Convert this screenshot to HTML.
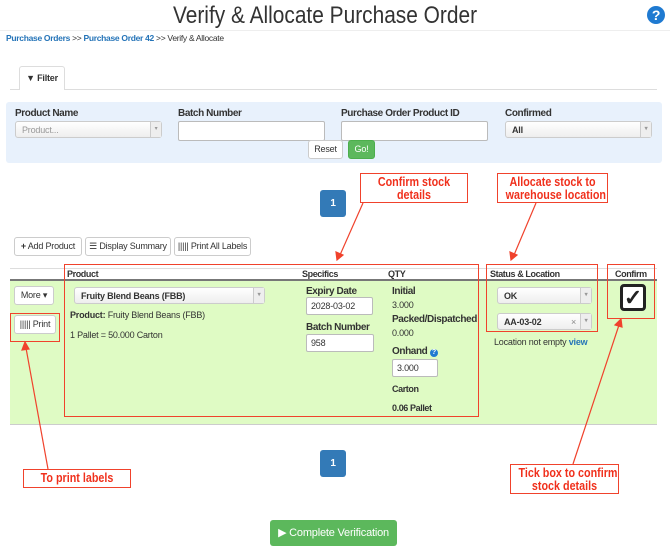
<!DOCTYPE html>
<html><head><meta charset="utf-8">
<style>
*{box-sizing:border-box;margin:0;padding:0}
body{width:670px;height:550px;position:relative;background:#fff;font-family:"Liberation Sans",Arial,sans-serif;color:#333;overflow:hidden;font-size:9px;letter-spacing:-0.2px}
.a{position:absolute;white-space:nowrap}
.inp{position:absolute;background:#fff;border:1px solid #bbb;border-radius:2px;height:17px;font-size:9px;padding:3px 4px;line-height:10px}
.sel{position:absolute;background:linear-gradient(#fff,#eee);border:1px solid #ccc;border-radius:3px;height:17px;font-size:9px;padding:3px 6px;line-height:10px;font-weight:bold}
.sel::after{content:"▾";position:absolute;right:0;top:0;width:10px;height:15px;border-left:1px solid #ccc;font-size:6px;color:#999;text-align:center;line-height:15px;background:#eee}
.btn{position:absolute;background:#fff;border:1px solid #ccc;border-radius:3px;font-size:9px;text-align:center;color:#333;white-space:nowrap}
.lbl{position:absolute;font-weight:bold;font-size:10px;color:#333;white-space:nowrap;letter-spacing:-0.4px}
.red{position:absolute;border:1.5px solid #f0422c}
.call{position:absolute;border:1.5px solid #f0422c;background:#fff;color:#f0301c;font-weight:bold;font-size:12.5px;letter-spacing:0;text-align:center;line-height:13px;white-space:nowrap}
.call span{display:block;transform:scaleX(0.86)}
.page{position:absolute;width:26px;height:27px;background:#337ab7;border-radius:3px;color:#fff;font-weight:bold;font-size:10px;text-align:center;line-height:27px}
</style></head><body>
<div class="a" style="left:0;top:0;width:670px;height:31px;border-bottom:1px solid #eee"></div>
<div class="a" style="left:0;top:2px;width:650px;text-align:center;font-size:24px;color:#333;line-height:28px;transform:scaleX(0.87);letter-spacing:0">Verify &amp; Allocate Purchase Order</div>
<div class="a" style="left:647px;top:6px;width:18px;height:18px;border-radius:50%;background:#1f7ad1;color:#fff;font-weight:bold;font-size:14px;text-align:center;line-height:18px">?</div>
<div class="a" style="left:6px;top:33px;font-size:8.5px;letter-spacing:-0.3px"><span style="color:#2574b8;font-weight:bold">Purchase Orders</span> &gt;&gt; <span style="color:#2574b8;font-weight:bold">Purchase Order 42</span> &gt;&gt; Verify &amp; Allocate</div>

<div class="a" style="left:10px;top:89px;width:647px;border-top:1px solid #ddd"></div>
<div class="a" style="left:19px;top:66px;width:46px;height:24px;border:1px solid #ddd;border-bottom:none;background:#fff;font-weight:bold;font-size:9px;text-align:center;line-height:22px;border-radius:3px 3px 0 0">▼ Filter</div>

<div class="a" style="left:6px;top:102px;width:656px;height:61px;background:#e8f1fc;border-radius:3px"></div>
<div class="lbl" style="left:15px;top:108px">Product Name</div>
<div class="lbl" style="left:178px;top:108px">Batch Number</div>
<div class="lbl" style="left:341px;top:108px">Purchase Order Product ID</div>
<div class="lbl" style="left:505px;top:108px">Confirmed</div>
<div class="sel" style="left:15px;top:121px;width:147px;font-weight:normal;color:#999">Product...</div>
<div class="inp" style="left:178px;top:121px;width:147px;height:20px"></div>
<div class="inp" style="left:341px;top:121px;width:147px;height:20px"></div>
<div class="sel" style="left:505px;top:121px;width:147px">All</div>
<div class="btn" style="left:308px;top:140px;width:35px;height:19px;line-height:17px">Reset</div>
<div class="btn" style="left:348px;top:140px;width:27px;height:19px;line-height:17px;background:#5cb85c;border-color:#4cae4c;color:#fff">Go!</div>

<div class="page" style="left:320px;top:190px">1</div>

<div class="btn" style="left:14px;top:237px;width:68px;height:19px;line-height:17px"><b>+</b> Add Product</div>
<div class="btn" style="left:85px;top:237px;width:86px;height:19px;line-height:17px">☰ Display Summary</div>
<div class="btn" style="left:174px;top:237px;width:77px;height:19px;line-height:17px">||||| Print All Labels</div>

<div class="a" style="left:10px;top:268px;width:647px;height:13px;border-top:1px solid #ddd;border-bottom:2px solid #777"></div>
<div class="a" style="left:10px;top:281px;width:647px;height:144px;background:#dffbc4;border-bottom:1px solid #ccc"></div>
<div class="lbl" style="left:67px;top:269px;font-size:9px">Product</div>
<div class="lbl" style="left:302px;top:269px;font-size:9px">Specifics</div>
<div class="lbl" style="left:388px;top:269px;font-size:9px">QTY</div>
<div class="lbl" style="left:490px;top:269px;font-size:9px">Status &amp; Location</div>
<div class="lbl" style="left:615px;top:269px;font-size:9px">Confirm</div>

<div class="btn" style="left:14px;top:286px;width:40px;height:19px;line-height:17px">More ▾</div>
<div class="btn" style="left:14px;top:315px;width:42px;height:19px;line-height:17px">||||| Print</div>

<div class="sel" style="left:74px;top:287px;width:191px">Fruity Blend Beans (FBB)</div>
<div class="a" style="left:70px;top:310px"><b>Product:</b> Fruity Blend Beans (FBB)</div>
<div class="a" style="left:70px;top:330px">1 Pallet = 50.000 Carton</div>

<div class="lbl" style="left:306px;top:286px">Expiry Date</div>
<div class="inp" style="left:306px;top:297px;width:67px;height:18px">2028-03-02</div>
<div class="lbl" style="left:306px;top:322px">Batch Number</div>
<div class="inp" style="left:306px;top:334px;width:68px;height:18px">958</div>

<div class="lbl" style="left:392px;top:286px">Initial</div>
<div class="a" style="left:392px;top:300px">3.000</div>
<div class="lbl" style="left:392px;top:314px">Packed/Dispatched</div>
<div class="a" style="left:392px;top:328px">0.000</div>
<div class="lbl" style="left:392px;top:346px">Onhand <span style="display:inline-block;width:8px;height:8px;border-radius:50%;background:#1f7ad1;color:#fff;font-size:7px;text-align:center;line-height:8px">?</span></div>
<div class="inp" style="left:392px;top:359px;width:46px;height:18px">3.000</div>
<div class="lbl" style="left:392px;top:384px;font-size:9px">Carton</div>
<div class="lbl" style="left:392px;top:403px;font-size:9px">0.06 Pallet</div>

<div class="sel" style="left:497px;top:287px;width:95px">OK</div>
<div class="sel" style="left:497px;top:313px;width:95px">AA-03-02<span style="position:absolute;right:15px;color:#888;font-weight:normal">×</span></div>
<div class="a" style="left:494px;top:337px">Location not empty <b style="color:#2574b8">view</b></div>

<div class="a" style="left:620px;top:284px;width:26px;height:27px;border:3px solid #222;border-radius:4px;background:#fff;font-size:22px;font-weight:bold;text-align:center;line-height:21px;color:#222">✓</div>

<div class="red" style="left:64px;top:264px;width:415px;height:153px"></div>
<div class="red" style="left:486px;top:264px;width:112px;height:68px"></div>
<div class="red" style="left:607px;top:264px;width:48px;height:55px"></div>
<div class="red" style="left:10px;top:313px;width:50px;height:29px"></div>

<div class="call" style="left:360px;top:173px;width:108px;height:30px;padding-top:2px"><span>Confirm stock<br>details</span></div>
<div class="call" style="left:497px;top:173px;width:111px;height:30px;padding-top:2px"><span>Allocate stock to<br>warehouse location</span></div>
<div class="call" style="left:23px;top:469px;width:108px;height:19px;line-height:16px"><span>To print labels</span></div>
<div class="call" style="left:510px;top:464px;width:109px;height:30px;padding-top:2px"><span>Tick box to confirm<br>stock details</span></div>

<svg class="a" style="left:0;top:0" width="670" height="550">
<g stroke="#f0422c" stroke-width="1.2" fill="#f0422c">
<line x1="363" y1="203" x2="340" y2="255"/><polygon points="337,260 336,252 343,255"/>
<line x1="536" y1="203" x2="514" y2="255"/><polygon points="511,260 510,252 517,255"/>
<line x1="48" y1="469" x2="26" y2="348"/><polygon points="25,342 22,350 29,349"/>
<line x1="573" y1="464" x2="619" y2="325"/><polygon points="621,319 615,325 622,327"/>
</g></svg>

<div class="page" style="left:320px;top:450px">1</div>
<div class="a" style="left:270px;top:520px;width:127px;height:26px;background:#5cb85c;border-radius:3px;color:#fff;font-size:11px;text-align:center;line-height:26px">▶ Complete Verification</div>
</body></html>
